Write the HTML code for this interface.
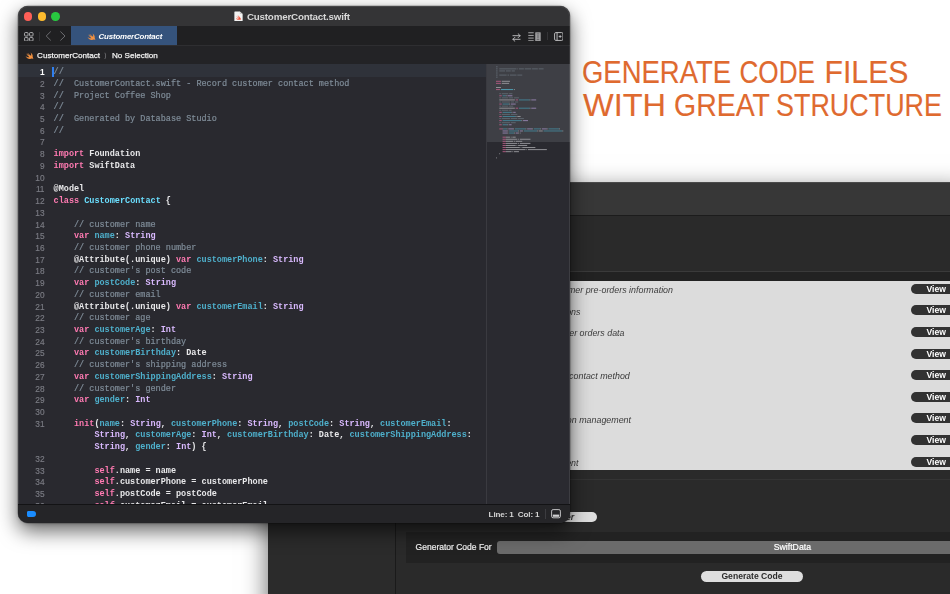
<!DOCTYPE html>
<html lang="en">
<head>
<meta charset="utf-8">
<title>CustomerContact.swift</title>
<style>
*{box-sizing:border-box;margin:0;padding:0}
html,body{width:950px;height:594px;overflow:hidden;background:#fff}
body{position:relative;font-family:"Liberation Sans",sans-serif;-webkit-font-smoothing:antialiased}
.abs{position:absolute}
/* back window */
#bw{position:absolute;left:268px;top:182px;width:700px;height:430px;background:#2a2a2a;will-change:transform;box-shadow:0 8px 24px rgba(0,0,0,.6)}
#bw .tb{position:absolute;left:0;top:0;right:0;height:34px;background:#373737;border-top:1px solid #4a4a4a;border-bottom:1px solid #1c1c1c}
#bw .side{position:absolute;left:0;top:34px;width:128px;bottom:0;background:#2b2b2b;border-right:1px solid #1a1a1a}
#bw .hdrline{position:absolute;left:128px;right:0;top:89px;height:9.5px;background:#222;border-top:1px solid #3a3a3a}
#bw .list{position:absolute;left:128px;right:0;top:98.5px;height:189px;background:#dcdcdc}
.row{position:absolute;left:0;right:0;height:21.6px}
.row i{position:absolute;top:4.5px;font-size:8.9px;color:#3c3c3c;white-space:nowrap;font-style:italic;line-height:11px}
.row b{position:absolute;left:514.5px;top:3.4px;width:60px;height:10px;border-radius:5px;background:#323232;color:#fff;font-size:8.6px;line-height:10px;padding-left:16px;font-weight:bold}
#bw .line2{position:absolute;left:128px;right:0;top:296.5px;height:1px;background:#343434}
#bw .pill1{position:absolute;left:270px;top:330px;width:58.500px;height:10.4px;border-radius:5.2px;background:#dedede;color:#333;font-size:8.6px;line-height:10.4px;font-weight:bold;font-style:italic;padding-left:28px}
#bw .grow{position:absolute;left:137.500px;right:0;top:349.600px;height:31px;background:#222}
#bw .glabel{position:absolute;left:147.600px;top:360px;font-size:8.5px;color:#f2f2f2;-webkit-text-stroke:.2px #f2f2f2;line-height:11px;white-space:nowrap}
#bw .drop{position:absolute;left:229px;top:358.700px;width:600px;height:13px;border-radius:3px;background:#6b6b6b;color:#fff;font-size:8.7px;line-height:13px;-webkit-text-stroke:.2px #fff}
#bw .drop span{position:absolute;left:276.800px}
#bw .gen{position:absolute;left:433px;top:388.6px;width:102px;height:11px;border-radius:5.5px;background:#dedede;color:#2c2c2c;font-size:8.6px;line-height:11px;font-weight:bold;text-align:center}
/* front window */
#fw{position:absolute;left:18px;top:6.3px;width:551.6px;height:517.2px;will-change:transform;border-radius:10px;background:#29292f;overflow:hidden;box-shadow:0 0 0 .5px rgba(0,0,0,.3),0 8px 20px rgba(0,0,0,.6),0 1px 4px rgba(0,0,0,.2)}
#fw .title{position:absolute;left:0;top:0;right:0;height:19.5px;background:#343436}
.tl{position:absolute;top:6.4px;width:8.8px;height:8.8px;border-radius:50%}
#fw .ttext{position:absolute;left:228.900px;top:4.700px;font-size:9.8px;color:#d8d8d8;white-space:nowrap;line-height:12px;font-weight:bold;letter-spacing:-.2px}
#fw .tabs{position:absolute;left:0;top:19.5px;right:0;height:19.3px;background:#202022}
#fw .tab{position:absolute;left:52.6px;top:.5px;width:106px;height:19px;background:#35537c}
#fw .tab span{position:absolute;left:28px;top:5.900px;font-size:7.9px;font-style:italic;color:#fff;line-height:10px;white-space:nowrap;font-weight:bold;letter-spacing:-.18px}
#fw .crumb{position:absolute;left:0;top:38.800px;right:0;height:19.700px;background:#232326;border-top:1px solid #2e2e31}
#fw .crumb span{position:absolute;top:4.800px;font-size:8.1px;color:#f0f0f0;-webkit-text-stroke:.25px #f0f0f0;line-height:10px;white-space:nowrap}
#fw .ed{position:absolute;left:0;top:58.3px;width:468.5px;height:439.5px;background:#29292f}
#fw .curline{position:absolute;left:0;top:58.3px;width:468.5px;height:12.4px;background:#2f323a}
#fw .mm{position:absolute;left:468px;top:58.3px;right:0;height:439.5px;background:#2a2a30;border-left:1px solid #3a3a40}
#fw .mmv{position:absolute;left:469px;top:58.3px;right:0;height:78px;background:#3e3f45}
#fw .status{position:absolute;left:0;top:497.8px;right:0;bottom:0;background:#252528;border-top:1px solid #131315}
#fw .status .lc{position:absolute;left:470.6px;top:5.2px;font-size:8.1px;color:#d4d4d4;line-height:10px;white-space:pre;font-weight:bold;letter-spacing:-.15px}
.cl{position:absolute;left:0;height:11.72px;line-height:11.72px;font-family:"Liberation Mono",monospace;font-size:8.5px;white-space:pre;color:#e6e6e6;font-weight:bold}
.ln{position:absolute;left:0;width:26.5px;text-align:right;color:#7b7c84;-webkit-text-stroke:.15px #7b7c84;font-size:8.3px;font-weight:normal;font-family:"Liberation Sans",sans-serif}
.ln.cur{color:#fff;font-weight:bold;-webkit-text-stroke:0}
.cd{position:absolute;left:35.6px}
.c{color:#7f8c98;font-weight:normal;-webkit-text-stroke:.2px #7f8c98}
.k{color:#ff7ab2}
.t{color:#dabaff}
.d{color:#4eb0cc}
.n{color:#6bdfff}
.p{color:#e8e8ea}
</style>
</head>
<body>
<svg class="abs" style="left:0;top:0" width="950" height="594" viewBox="0 0 950 594" font-family="'Liberation Sans',sans-serif" font-size="31.600" fill="#df6a2f" stroke="#df6a2f" stroke-width=".15">
<text x="582" y="82.900" textLength="149" lengthAdjust="spacingAndGlyphs">GENERATE</text>
<text x="739.500" y="82.900" textLength="75.500" lengthAdjust="spacingAndGlyphs">CODE</text>
<text x="824.500" y="82.900" textLength="84" lengthAdjust="spacingAndGlyphs">FILES</text>
<text x="583" y="115.700" textLength="83" lengthAdjust="spacingAndGlyphs">WITH</text>
<text x="674" y="115.700" textLength="96" lengthAdjust="spacingAndGlyphs">GREAT</text>
<text x="776" y="115.700" textLength="166" lengthAdjust="spacingAndGlyphs">STRUCTURE</text>
</svg>

<div id="bw">
  <div class="tb"></div>
  <div class="side"></div>
  <div class="hdrline"></div>
  <div class="list">
    <div class="row" style="top:0"><i style="right:295.0px">mer pre-orders information</i><b>View</b></div>
    <div class="row" style="top:21.6px"><i style="right:387.5px">ons</i><b>View</b></div>
    <div class="row" style="top:43.2px"><i style="right:343.5px">ner orders data</i><b>View</b></div>
    <div class="row" style="top:64.8px"><b>View</b></div>
    <div class="row" style="top:86.4px"><i style="right:338.2px">r contact method</i><b>View</b></div>
    <div class="row" style="top:108px"><b>View</b></div>
    <div class="row" style="top:129.6px"><i style="right:337.0px">tion management</i><b>View</b></div>
    <div class="row" style="top:151.2px"><b>View</b></div>
    <div class="row" style="top:172.8px"><i style="right:389.5px">ent</i><b>View</b></div>
  </div>
  <div class="line2"></div>
  <div class="pill1">er</div>
  <div class="grow"></div>
  <div class="glabel">Generator Code For</div>
  <div class="drop"><span>SwiftData</span></div>
  <div class="gen">Generate Code</div>
</div>

<div id="fw">
  <div class="title">
    <div class="tl" style="left:5.600px;background:#fe5f57"></div>
    <div class="tl" style="left:19.500px;background:#febc2e"></div>
    <div class="tl" style="left:33.400px;background:#28c840"></div>
    <svg class="abs" style="left:216px;top:4.500px" width="9.400" height="10.500" viewBox="0 0 10 12" preserveAspectRatio="none"><path d="M1 .5h5.2L9.2 3.5v7.5a.6.6 0 0 1-.6.6H1a.6.6 0 0 1-.6-.6V1.100A.6.6 0 0 1 1 .5z" fill="#f2f2f2"/><path d="M6.200 .5v3h3z" fill="#c8c8c8"/><path d="M2.300 5.300c1.200 1.300 2.600 2.100 3.600 2.400-.9-.9-1.700-2-2.100-2.900 1.600 1.300 3.300 2.700 3.500 4.300.3.500.4.900.2 1.200-.3-.500-.8-.6-1.300-.4-1.600.6-3.300-.2-4.200-1.600 1 .5 2.300.7 3 .3-1.100-.9-2.100-2.200-2.700-3.300z" fill="#f05138"/></svg>
    <div class="ttext">CustomerContact.swift</div>
  </div>
  <div class="tabs">
    <svg class="abs" style="left:6.400px;top:6px" width="9.600" height="9.600" viewBox="0 0 10 10" fill="none" stroke="#c4c4c6" stroke-width=".9"><rect x=".6" y=".6" width="3.6" height="3.6" rx=".8"/><rect x="5.800" y=".6" width="3.6" height="3.6" rx=".8"/><rect x=".6" y="5.800" width="3.600" height="3.600" rx=".8"/><rect x="5.800" y="5.800" width="3.600" height="3.600" rx=".8"/></svg>
    <div class="abs" style="left:21px;top:6.100px;width:1px;height:9px;background:#343437"></div>
    <svg class="abs" style="left:27px;top:5.600px" width="24" height="10" viewBox="0 0 24 10" fill="none" stroke="#6c6c70" stroke-width="1" stroke-linecap="round" stroke-linejoin="round"><path d="M5.500 .8L1.200 5l4.300 4.200"/><path d="M15.700 .8L20 5l-4.300 4.200"/></svg>
    <div class="tab">
      <svg class="abs" style="left:16.500px;top:5.800px" width="9" height="9" viewBox="0 0 10 10"><path d="M.6 5.600c1.300 1.100 3 1.700 4.400 1.300C3.500 5.800 2.200 4.200 1.400 2.800c1.200 1 2.600 2 3.700 2.600C4 4.300 3.100 3.100 2.500 2c1.500 1.300 3.200 2.600 4.300 3.400.3-1.200 0-2.500-.7-3.700 1.800 1.100 2.900 3.300 2.400 5.100.6.700.8 1.600.6 2.200-.4-.7-1-.9-1.600-.6C5 9.700 2 8.500.6 5.600z" fill="#f59240"/></svg>
      <span>CustomerContact</span>
    </div>
    <svg class="abs" style="left:494.300px;top:7px" width="9" height="9" viewBox="0 0 10 10" fill="none" stroke="#c4c4c6" stroke-width="1" stroke-linecap="round" stroke-linejoin="round"><path d="M1 3h8M6.800 .8L9 3 6.800 5.200M9 7H1M3.200 4.800L1 7l2.200 2.200"/></svg>
    <svg class="abs" style="left:510px;top:6.300px" width="13.300" height="9.500" viewBox="0 0 14 10" fill="none" stroke="#bdbdbf" stroke-width=".9"><path d="M.3 .8h5.700M.3 3.600h5.700M.3 6.400h5.700M.3 9.200h5.700"/><rect x="7.600" y=".3" width="5.800" height="9.400" rx=".6" fill="#9c9c9e" stroke="none"/><path d="M9.200 2h2.600M9.200 8h2.600" stroke="#555558" stroke-width=".8"/><rect x="9.700" y="3.200" width="1.600" height="3.600" fill="#77777a" stroke="none"/></svg>
    <div class="abs" style="left:529px;top:6.800px;width:1px;height:8px;background:#343437"></div>
    <svg class="abs" style="left:535.800px;top:6.500px" width="9.600" height="9" viewBox="0 0 10 9.400" fill="none" stroke="#cfcfd1" stroke-width=".9"><rect x=".6" y=".6" width="8.800" height="8.200" rx="1.400"/><path d="M3.200 .6v8.200"/><path d="M4.900 4.700h3M6.400 3.200v3" stroke-width=".8"/></svg>
  </div>
  <div class="crumb">
    <svg class="abs" style="left:6.500px;top:5.300px" width="9" height="9" viewBox="0 0 10 10"><path d="M.6 5.600c1.300 1.100 3 1.700 4.400 1.300C3.500 5.800 2.200 4.200 1.400 2.800c1.200 1 2.600 2 3.700 2.600C4 4.300 3.100 3.100 2.500 2c1.500 1.300 3.200 2.600 4.300 3.400.3-1.200 0-2.500-.7-3.700 1.800 1.100 2.900 3.300 2.400 5.100.6.700.8 1.600.6 2.200-.4-.7-1-.9-1.600-.6C5 9.700 2 8.500.6 5.600z" fill="#f59240"/></svg>
    <span style="left:19.100px">CustomerContact</span>
    <span style="left:85.800px;color:#8a8a8e;font-size:7px;-webkit-text-stroke:0">⟩</span>
    <span style="left:93.900px">No Selection</span>
  </div>
  <div class="ed"></div>
  <div class="curline"></div>
  <div class="mm"></div>
  <div class="mmv"></div>
  <div class="abs" id="codewrap" style="left:0;top:-6.5px;width:468.5px;height:504.300px;overflow:hidden">
  <div class="abs" style="left:34.200px;top:67px;width:1.900px;height:10px;background:#2f7ff0"></div>
<div class="cl" style="top:67.67px"><span class="ln cur">1</span><span class="cd"><span class="c">//</span></span></div>
<div class="cl" style="top:79.39px"><span class="ln">2</span><span class="cd"><span class="c">//  CustomerContact.swift - Record customer contact method</span></span></div>
<div class="cl" style="top:91.11px"><span class="ln">3</span><span class="cd"><span class="c">//  Project Coffee Shop</span></span></div>
<div class="cl" style="top:102.83px"><span class="ln">4</span><span class="cd"><span class="c">//</span></span></div>
<div class="cl" style="top:114.55px"><span class="ln">5</span><span class="cd"><span class="c">//  Generated by Database Studio</span></span></div>
<div class="cl" style="top:126.27px"><span class="ln">6</span><span class="cd"><span class="c">//</span></span></div>
<div class="cl" style="top:137.99px"><span class="ln">7</span><span class="cd"></span></div>
<div class="cl" style="top:149.71px"><span class="ln">8</span><span class="cd"><span class="k">import</span><span class="p"> Foundation</span></span></div>
<div class="cl" style="top:161.43px"><span class="ln">9</span><span class="cd"><span class="k">import</span><span class="p"> SwiftData</span></span></div>
<div class="cl" style="top:173.15px"><span class="ln">10</span><span class="cd"></span></div>
<div class="cl" style="top:184.87px"><span class="ln">11</span><span class="cd"><span class="p">@Model</span></span></div>
<div class="cl" style="top:196.59px"><span class="ln">12</span><span class="cd"><span class="k">class</span><span class="p"> </span><span class="n">CustomerContact</span><span class="p"> {</span></span></div>
<div class="cl" style="top:208.31px"><span class="ln">13</span><span class="cd"></span></div>
<div class="cl" style="top:220.03px"><span class="ln">14</span><span class="cd"><span class="p">    </span><span class="c">// customer name</span></span></div>
<div class="cl" style="top:231.75px"><span class="ln">15</span><span class="cd"><span class="p">    </span><span class="k">var</span><span class="p"> </span><span class="d">name</span><span class="p">: </span><span class="t">String</span></span></div>
<div class="cl" style="top:243.47px"><span class="ln">16</span><span class="cd"><span class="p">    </span><span class="c">// customer phone number</span></span></div>
<div class="cl" style="top:255.19px"><span class="ln">17</span><span class="cd"><span class="p">    @Attribute(.unique) </span><span class="k">var</span><span class="p"> </span><span class="d">customerPhone</span><span class="p">: </span><span class="t">String</span></span></div>
<div class="cl" style="top:266.91px"><span class="ln">18</span><span class="cd"><span class="p">    </span><span class="c">// customer's post code</span></span></div>
<div class="cl" style="top:278.63px"><span class="ln">19</span><span class="cd"><span class="p">    </span><span class="k">var</span><span class="p"> </span><span class="d">postCode</span><span class="p">: </span><span class="t">String</span></span></div>
<div class="cl" style="top:290.35px"><span class="ln">20</span><span class="cd"><span class="p">    </span><span class="c">// customer email</span></span></div>
<div class="cl" style="top:302.07px"><span class="ln">21</span><span class="cd"><span class="p">    @Attribute(.unique) </span><span class="k">var</span><span class="p"> </span><span class="d">customerEmail</span><span class="p">: </span><span class="t">String</span></span></div>
<div class="cl" style="top:313.79px"><span class="ln">22</span><span class="cd"><span class="p">    </span><span class="c">// customer age</span></span></div>
<div class="cl" style="top:325.51px"><span class="ln">23</span><span class="cd"><span class="p">    </span><span class="k">var</span><span class="p"> </span><span class="d">customerAge</span><span class="p">: </span><span class="t">Int</span></span></div>
<div class="cl" style="top:337.23px"><span class="ln">24</span><span class="cd"><span class="p">    </span><span class="c">// customer's birthday</span></span></div>
<div class="cl" style="top:348.95px"><span class="ln">25</span><span class="cd"><span class="p">    </span><span class="k">var</span><span class="p"> </span><span class="d">customerBirthday</span><span class="p">: Date</span></span></div>
<div class="cl" style="top:360.67px"><span class="ln">26</span><span class="cd"><span class="p">    </span><span class="c">// customer's shipping address</span></span></div>
<div class="cl" style="top:372.39px"><span class="ln">27</span><span class="cd"><span class="p">    </span><span class="k">var</span><span class="p"> </span><span class="d">customerShippingAddress</span><span class="p">: </span><span class="t">String</span></span></div>
<div class="cl" style="top:384.11px"><span class="ln">28</span><span class="cd"><span class="p">    </span><span class="c">// customer's gender</span></span></div>
<div class="cl" style="top:395.83px"><span class="ln">29</span><span class="cd"><span class="p">    </span><span class="k">var</span><span class="p"> </span><span class="d">gender</span><span class="p">: </span><span class="t">Int</span></span></div>
<div class="cl" style="top:407.55px"><span class="ln">30</span><span class="cd"></span></div>
<div class="cl" style="top:419.27px"><span class="ln">31</span><span class="cd"><span class="p">    </span><span class="k">init</span><span class="p">(</span><span class="d">name</span><span class="p">: </span><span class="t">String</span><span class="p">, </span><span class="d">customerPhone</span><span class="p">: </span><span class="t">String</span><span class="p">, </span><span class="d">postCode</span><span class="p">: </span><span class="t">String</span><span class="p">, </span><span class="d">customerEmail</span><span class="p">:</span></span></div>
<div class="cl" style="top:430.99px"><span class="cd"><span class="p">        </span><span class="t">String</span><span class="p">, </span><span class="d">customerAge</span><span class="p">: </span><span class="t">Int</span><span class="p">, </span><span class="d">customerBirthday</span><span class="p">: Date, </span><span class="d">customerShippingAddress</span><span class="p">:</span></span></div>
<div class="cl" style="top:442.71px"><span class="cd"><span class="p">        </span><span class="t">String</span><span class="p">, </span><span class="d">gender</span><span class="p">: </span><span class="t">Int</span><span class="p">) {</span></span></div>
<div class="cl" style="top:454.43px"><span class="ln">32</span><span class="cd"></span></div>
<div class="cl" style="top:466.15px"><span class="ln">33</span><span class="cd"><span class="p">        </span><span class="k">self</span><span class="p">.name = name</span></span></div>
<div class="cl" style="top:477.87px"><span class="ln">34</span><span class="cd"><span class="p">        </span><span class="k">self</span><span class="p">.customerPhone = customerPhone</span></span></div>
<div class="cl" style="top:489.59px"><span class="ln">35</span><span class="cd"><span class="p">        </span><span class="k">self</span><span class="p">.postCode = postCode</span></span></div>
<div class="cl" style="top:501.31px"><span class="ln">36</span><span class="cd"><span class="p">        </span><span class="k">self</span><span class="p">.customerEmail = customerEmail</span></span></div>
  </div>
  <svg class="abs" style="left:-18px;top:-6.500px" width="950" height="594" viewBox="0 0 950 594">
<rect x="496.00" y="66.30" width="1.64" height="1" fill="#5d646d"/>
<rect x="496.00" y="68.37" width="1.64" height="1" fill="#5d646d"/>
<rect x="499.28" y="68.37" width="17.22" height="1" fill="#5d646d"/>
<rect x="517.32" y="68.37" width="0.82" height="1" fill="#5d646d"/>
<rect x="518.96" y="68.37" width="4.92" height="1" fill="#5d646d"/>
<rect x="524.70" y="68.37" width="6.56" height="1" fill="#5d646d"/>
<rect x="532.08" y="68.37" width="5.74" height="1" fill="#5d646d"/>
<rect x="538.64" y="68.37" width="4.92" height="1" fill="#5d646d"/>
<rect x="496.00" y="70.44" width="1.64" height="1" fill="#5d646d"/>
<rect x="499.28" y="70.44" width="5.74" height="1" fill="#5d646d"/>
<rect x="505.84" y="70.44" width="4.92" height="1" fill="#5d646d"/>
<rect x="511.58" y="70.44" width="3.28" height="1" fill="#5d646d"/>
<rect x="496.00" y="72.51" width="1.64" height="1" fill="#5d646d"/>
<rect x="496.00" y="74.58" width="1.64" height="1" fill="#5d646d"/>
<rect x="499.28" y="74.58" width="7.38" height="1" fill="#5d646d"/>
<rect x="507.48" y="74.58" width="1.64" height="1" fill="#5d646d"/>
<rect x="509.94" y="74.58" width="6.56" height="1" fill="#5d646d"/>
<rect x="517.32" y="74.58" width="4.92" height="1" fill="#5d646d"/>
<rect x="496.00" y="76.65" width="1.64" height="1" fill="#5d646d"/>
<rect x="496.00" y="80.79" width="4.92" height="1" fill="#a8577c"/>
<rect x="501.74" y="80.79" width="8.20" height="1" fill="#909095"/>
<rect x="496.00" y="82.86" width="4.92" height="1" fill="#a8577c"/>
<rect x="501.74" y="82.86" width="7.38" height="1" fill="#909095"/>
<rect x="496.00" y="87.00" width="4.92" height="1" fill="#909095"/>
<rect x="496.00" y="89.07" width="4.10" height="1" fill="#a8577c"/>
<rect x="500.92" y="89.07" width="12.30" height="1" fill="#4f9db2"/>
<rect x="514.04" y="89.07" width="0.82" height="1" fill="#909095"/>
<rect x="499.28" y="93.21" width="1.64" height="1" fill="#5d646d"/>
<rect x="501.74" y="93.21" width="6.56" height="1" fill="#5d646d"/>
<rect x="509.12" y="93.21" width="3.28" height="1" fill="#5d646d"/>
<rect x="499.28" y="95.28" width="2.46" height="1" fill="#a8577c"/>
<rect x="502.56" y="95.28" width="3.28" height="1" fill="#447f91"/>
<rect x="505.84" y="95.28" width="0.82" height="1" fill="#909095"/>
<rect x="507.48" y="95.28" width="4.92" height="1" fill="#8f7fa8"/>
<rect x="499.28" y="97.35" width="1.64" height="1" fill="#5d646d"/>
<rect x="501.74" y="97.35" width="6.56" height="1" fill="#5d646d"/>
<rect x="509.12" y="97.35" width="4.10" height="1" fill="#5d646d"/>
<rect x="514.04" y="97.35" width="4.92" height="1" fill="#5d646d"/>
<rect x="499.28" y="99.42" width="15.58" height="1" fill="#909095"/>
<rect x="515.68" y="99.42" width="2.46" height="1" fill="#a8577c"/>
<rect x="518.96" y="99.42" width="10.66" height="1" fill="#447f91"/>
<rect x="529.62" y="99.42" width="0.82" height="1" fill="#909095"/>
<rect x="531.26" y="99.42" width="4.92" height="1" fill="#8f7fa8"/>
<rect x="499.28" y="101.49" width="1.64" height="1" fill="#5d646d"/>
<rect x="501.74" y="101.49" width="8.20" height="1" fill="#5d646d"/>
<rect x="510.76" y="101.49" width="3.28" height="1" fill="#5d646d"/>
<rect x="514.86" y="101.49" width="3.28" height="1" fill="#5d646d"/>
<rect x="499.28" y="103.56" width="2.46" height="1" fill="#a8577c"/>
<rect x="502.56" y="103.56" width="6.56" height="1" fill="#447f91"/>
<rect x="509.12" y="103.56" width="0.82" height="1" fill="#909095"/>
<rect x="510.76" y="103.56" width="4.92" height="1" fill="#8f7fa8"/>
<rect x="499.28" y="105.63" width="1.64" height="1" fill="#5d646d"/>
<rect x="501.74" y="105.63" width="6.56" height="1" fill="#5d646d"/>
<rect x="509.12" y="105.63" width="4.10" height="1" fill="#5d646d"/>
<rect x="499.28" y="107.70" width="15.58" height="1" fill="#909095"/>
<rect x="515.68" y="107.70" width="2.46" height="1" fill="#a8577c"/>
<rect x="518.96" y="107.70" width="10.66" height="1" fill="#447f91"/>
<rect x="529.62" y="107.70" width="0.82" height="1" fill="#909095"/>
<rect x="531.26" y="107.70" width="4.92" height="1" fill="#8f7fa8"/>
<rect x="499.28" y="109.77" width="1.64" height="1" fill="#5d646d"/>
<rect x="501.74" y="109.77" width="6.56" height="1" fill="#5d646d"/>
<rect x="509.12" y="109.77" width="2.46" height="1" fill="#5d646d"/>
<rect x="499.28" y="111.84" width="2.46" height="1" fill="#a8577c"/>
<rect x="502.56" y="111.84" width="9.02" height="1" fill="#447f91"/>
<rect x="511.58" y="111.84" width="0.82" height="1" fill="#909095"/>
<rect x="513.22" y="111.84" width="2.46" height="1" fill="#8f7fa8"/>
<rect x="499.28" y="113.91" width="1.64" height="1" fill="#5d646d"/>
<rect x="501.74" y="113.91" width="8.20" height="1" fill="#5d646d"/>
<rect x="510.76" y="113.91" width="6.56" height="1" fill="#5d646d"/>
<rect x="499.28" y="115.98" width="2.46" height="1" fill="#a8577c"/>
<rect x="502.56" y="115.98" width="13.12" height="1" fill="#447f91"/>
<rect x="515.68" y="115.98" width="0.82" height="1" fill="#909095"/>
<rect x="517.32" y="115.98" width="3.28" height="1" fill="#909095"/>
<rect x="499.28" y="118.05" width="1.64" height="1" fill="#5d646d"/>
<rect x="501.74" y="118.05" width="8.20" height="1" fill="#5d646d"/>
<rect x="510.76" y="118.05" width="6.56" height="1" fill="#5d646d"/>
<rect x="518.14" y="118.05" width="5.74" height="1" fill="#5d646d"/>
<rect x="499.28" y="120.12" width="2.46" height="1" fill="#a8577c"/>
<rect x="502.56" y="120.12" width="18.86" height="1" fill="#447f91"/>
<rect x="521.42" y="120.12" width="0.82" height="1" fill="#909095"/>
<rect x="523.06" y="120.12" width="4.92" height="1" fill="#8f7fa8"/>
<rect x="499.28" y="122.19" width="1.64" height="1" fill="#5d646d"/>
<rect x="501.74" y="122.19" width="8.20" height="1" fill="#5d646d"/>
<rect x="510.76" y="122.19" width="4.92" height="1" fill="#5d646d"/>
<rect x="499.28" y="124.26" width="2.46" height="1" fill="#a8577c"/>
<rect x="502.56" y="124.26" width="4.92" height="1" fill="#447f91"/>
<rect x="507.48" y="124.26" width="0.82" height="1" fill="#909095"/>
<rect x="509.12" y="124.26" width="2.46" height="1" fill="#8f7fa8"/>
<rect x="499.28" y="128.40" width="3.28" height="1" fill="#a8577c"/>
<rect x="502.56" y="128.40" width="0.82" height="1" fill="#909095"/>
<rect x="503.38" y="128.40" width="3.28" height="1" fill="#447f91"/>
<rect x="506.66" y="128.40" width="0.82" height="1" fill="#909095"/>
<rect x="508.30" y="128.40" width="4.92" height="1" fill="#8f7fa8"/>
<rect x="513.22" y="128.40" width="0.82" height="1" fill="#909095"/>
<rect x="514.86" y="128.40" width="10.66" height="1" fill="#447f91"/>
<rect x="525.52" y="128.40" width="0.82" height="1" fill="#909095"/>
<rect x="527.16" y="128.40" width="4.92" height="1" fill="#8f7fa8"/>
<rect x="532.08" y="128.40" width="0.82" height="1" fill="#909095"/>
<rect x="533.72" y="128.40" width="6.56" height="1" fill="#447f91"/>
<rect x="540.28" y="128.40" width="0.82" height="1" fill="#909095"/>
<rect x="541.92" y="128.40" width="4.92" height="1" fill="#8f7fa8"/>
<rect x="546.84" y="128.40" width="0.82" height="1" fill="#909095"/>
<rect x="548.48" y="128.40" width="10.66" height="1" fill="#447f91"/>
<rect x="559.14" y="128.40" width="0.82" height="1" fill="#909095"/>
<rect x="502.56" y="130.47" width="4.92" height="1" fill="#8f7fa8"/>
<rect x="507.48" y="130.47" width="0.82" height="1" fill="#909095"/>
<rect x="509.12" y="130.47" width="9.02" height="1" fill="#447f91"/>
<rect x="518.14" y="130.47" width="0.82" height="1" fill="#909095"/>
<rect x="519.78" y="130.47" width="2.46" height="1" fill="#8f7fa8"/>
<rect x="522.24" y="130.47" width="0.82" height="1" fill="#909095"/>
<rect x="523.88" y="130.47" width="13.12" height="1" fill="#447f91"/>
<rect x="537.00" y="130.47" width="0.82" height="1" fill="#909095"/>
<rect x="538.64" y="130.47" width="4.10" height="1" fill="#909095"/>
<rect x="543.56" y="130.47" width="18.86" height="1" fill="#447f91"/>
<rect x="562.42" y="130.47" width="0.82" height="1" fill="#909095"/>
<rect x="502.56" y="132.54" width="4.92" height="1" fill="#8f7fa8"/>
<rect x="507.48" y="132.54" width="0.82" height="1" fill="#909095"/>
<rect x="509.12" y="132.54" width="4.92" height="1" fill="#447f91"/>
<rect x="514.04" y="132.54" width="0.82" height="1" fill="#909095"/>
<rect x="515.68" y="132.54" width="2.46" height="1" fill="#8f7fa8"/>
<rect x="518.14" y="132.54" width="0.82" height="1" fill="#909095"/>
<rect x="519.78" y="132.54" width="0.82" height="1" fill="#909095"/>
<rect x="502.56" y="136.68" width="3.28" height="1" fill="#a8577c"/>
<rect x="505.84" y="136.68" width="4.10" height="1" fill="#909095"/>
<rect x="510.76" y="136.68" width="0.82" height="1" fill="#909095"/>
<rect x="512.40" y="136.68" width="3.28" height="1" fill="#909095"/>
<rect x="502.56" y="138.75" width="3.28" height="1" fill="#a8577c"/>
<rect x="505.84" y="138.75" width="11.48" height="1" fill="#909095"/>
<rect x="518.14" y="138.75" width="0.82" height="1" fill="#909095"/>
<rect x="519.78" y="138.75" width="10.66" height="1" fill="#909095"/>
<rect x="502.56" y="140.82" width="3.28" height="1" fill="#a8577c"/>
<rect x="505.84" y="140.82" width="7.38" height="1" fill="#909095"/>
<rect x="514.04" y="140.82" width="0.82" height="1" fill="#909095"/>
<rect x="515.68" y="140.82" width="6.56" height="1" fill="#909095"/>
<rect x="502.56" y="142.89" width="3.28" height="1" fill="#a8577c"/>
<rect x="505.84" y="142.89" width="11.48" height="1" fill="#909095"/>
<rect x="518.14" y="142.89" width="0.82" height="1" fill="#909095"/>
<rect x="519.78" y="142.89" width="10.66" height="1" fill="#909095"/>
<rect x="502.56" y="144.96" width="3.28" height="1" fill="#a8577c"/>
<rect x="505.84" y="144.96" width="9.84" height="1" fill="#909095"/>
<rect x="516.50" y="144.96" width="0.82" height="1" fill="#909095"/>
<rect x="518.14" y="144.96" width="9.02" height="1" fill="#909095"/>
<rect x="502.56" y="147.03" width="3.28" height="1" fill="#a8577c"/>
<rect x="505.84" y="147.03" width="13.94" height="1" fill="#909095"/>
<rect x="520.60" y="147.03" width="0.82" height="1" fill="#909095"/>
<rect x="522.24" y="147.03" width="13.12" height="1" fill="#909095"/>
<rect x="502.56" y="149.10" width="3.28" height="1" fill="#a8577c"/>
<rect x="505.84" y="149.10" width="19.68" height="1" fill="#909095"/>
<rect x="526.34" y="149.10" width="0.82" height="1" fill="#909095"/>
<rect x="527.98" y="149.10" width="18.86" height="1" fill="#909095"/>
<rect x="502.56" y="151.17" width="3.28" height="1" fill="#a8577c"/>
<rect x="505.84" y="151.17" width="5.74" height="1" fill="#909095"/>
<rect x="512.40" y="151.17" width="0.82" height="1" fill="#909095"/>
<rect x="514.04" y="151.17" width="4.92" height="1" fill="#909095"/>
<rect x="499.28" y="153.24" width="0.82" height="1" fill="#909095"/>
<rect x="496.00" y="157.38" width="0.82" height="1" fill="#909095"/>
  </svg>
  <div class="abs" style="left:0;top:0;right:0;bottom:0;border-radius:10px;border:1px solid rgba(255,255,255,.09);pointer-events:none"></div>
  <div class="status">
    <div class="abs" style="left:8.500px;top:6px;width:9.500px;height:6.500px;background:#1a8cff;border-radius:1.500px 3.200px 3.200px 1.500px"></div>
    <div class="lc">Line: 1  Col: 1</div>
    <div class="abs" style="left:527px;top:4.500px;width:1px;height:10px;background:#3c3c40"></div>
    <svg class="abs" style="left:532.800px;top:4.600px" width="10" height="10" viewBox="0 0 10 10" fill="none" stroke="#d0d0d2" stroke-width=".9"><rect x=".6" y=".6" width="8.800" height="8.200" rx="1.500"/><rect x="1.800" y="5.600" width="6.400" height="2.200" fill="#d0d0d2" stroke="none"/></svg>
  </div>
</div>
</body>
</html>
